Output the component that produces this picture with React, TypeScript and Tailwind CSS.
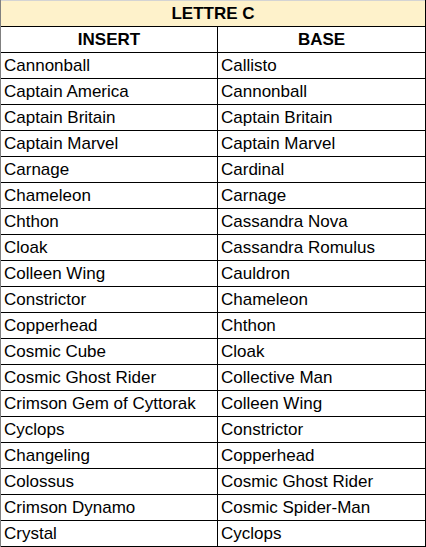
import React from "react";

const rows: [string, string][] = [
  ["Cannonball", "Callisto"],
  ["Captain America", "Cannonball"],
  ["Captain Britain", "Captain Britain"],
  ["Captain Marvel", "Captain Marvel"],
  ["Carnage", "Cardinal"],
  ["Chameleon", "Carnage"],
  ["Chthon", "Cassandra Nova"],
  ["Cloak", "Cassandra Romulus"],
  ["Colleen Wing", "Cauldron"],
  ["Constrictor", "Chameleon"],
  ["Copperhead", "Chthon"],
  ["Cosmic Cube", "Cloak"],
  ["Cosmic Ghost Rider", "Collective Man"],
  ["Crimson Gem of Cyttorak", "Colleen Wing"],
  ["Cyclops", "Constrictor"],
  ["Changeling", "Copperhead"],
  ["Colossus", "Cosmic Ghost Rider"],
  ["Crimson Dynamo", "Cosmic Spider-Man"],
  ["Crystal", "Cyclops"],
];

export default function App() {
  return (
    <div
      className="w-[426px] h-[547px] bg-white text-black text-[17px]"
      style={{ fontFamily: '"Liberation Sans", Arial, sans-serif' }}
    >
      <div className="w-[426px] border-l border-l-[#808080] border-r border-r-black">
        <div className="h-[27px] border-t border-t-[#d4d4d4] border-b border-b-black bg-[#fef2cb] flex items-center justify-center font-bold leading-[25px]">
          LETTRE C
        </div>
        <div className="grid grid-cols-[217px_207px] h-[26px] border-b border-b-black font-bold leading-[26px]">
          <div className="border-r border-r-black text-center">INSERT</div>
          <div className="text-center">BASE</div>
        </div>
        {rows.map(([a, b], i) => (
          <div
            key={i}
            className="grid grid-cols-[217px_207px] h-[26px] border-b border-b-black leading-[26px]"
          >
            <div className="border-r border-r-black pl-[3px] whitespace-nowrap">{a}</div>
            <div className="pl-[3px] whitespace-nowrap">{b}</div>
          </div>
        ))}
      </div>
    </div>
  );
}
